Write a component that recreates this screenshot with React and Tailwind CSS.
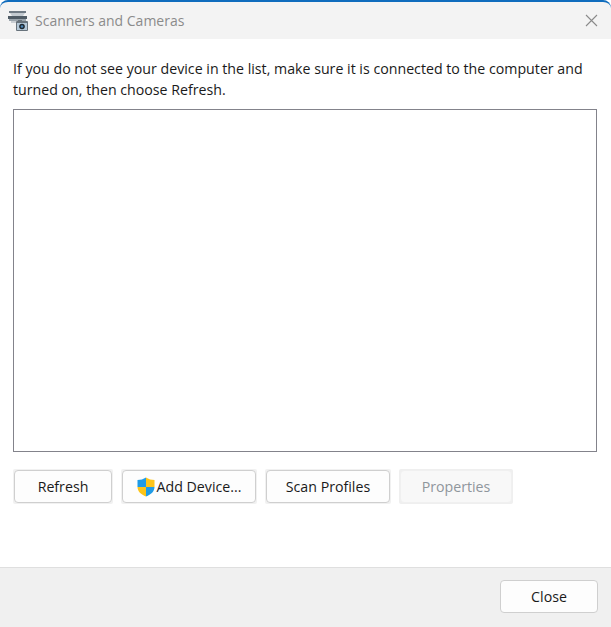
import { useState } from 'react'

function ScannerIcon() {
  return (
    <svg width="21" height="21" viewBox="0 0 21 21" className="shrink-0">
      <rect x="1" y="1" width="17" height="2" fill="#6f7a84" />
      <path d="M2 3h15l-2 3H4z" fill="#c3cad0" />
      <rect x="0" y="6" width="19" height="3" fill="#4f5b65" />
      <rect x="1" y="9" width="17" height="2" fill="#9aa4ac" />
      <rect x="3" y="11" width="5" height="2" fill="#c9ced3" />
      <rect x="8" y="11" width="12" height="10" rx="1" fill="#68737c" />
      <rect x="9" y="13" width="10" height="7" fill="#b4c8d8" />
      <rect x="10" y="10" width="4" height="2" fill="#68737c" />
      <circle cx="14" cy="16.5" r="2.8" fill="#1d2730" />
      <circle cx="14" cy="16.5" r="1.3" fill="#4b86b8" />
    </svg>
  )
}

function ShieldIcon() {
  return (
    <svg width="18" height="20" viewBox="1 0 17 20" className="shrink-0">
      <path d="M9.5 0.5C7 2.2 4 3 1 3v7h8.5z" fill="#1f9be6" />
      <path d="M9.5 0.5V10H18V3c-3 0-6-.8-8.5-2.5z" fill="#fcc419" />
      <path d="M9.5 10v9.5c5-2 8.5-5 8.5-9.5z" fill="#1f9be6" />
      <path d="M1 10c0 4.5 3.5 7.5 8.5 9.5V10z" fill="#fcc419" />
    </svg>
  )
}

function DialogButton({ children, className = '', disabled = false }) {
  return (
    <div className={`rounded-[2px] p-px ${disabled ? 'bg-[#efefef]' : 'bg-[#f1f1f1]'} ${className}`}>
      <button
        disabled={disabled}
        className={`flex h-[33px] w-full items-center justify-center rounded-[4px] border text-[14.2px] ${
          disabled
            ? 'border-[#f0f0f0] bg-[#f8f8f8] text-[#8f969c]'
            : 'border-[#cfcfcf] bg-[#fdfdfd] text-[#1a1a1a]'
        }`}
      >
        {children}
      </button>
    </div>
  )
}

export default function App() {
  const [devices] = useState([])

  return (
    <div className="flex h-[627px] w-[611px] flex-col overflow-hidden bg-white font-['Open_Sans','Noto_Sans',sans-serif]">
      <div className="flex h-[39px] shrink-0 items-center justify-between rounded-t-[8px] border-t-2 border-[#0f6cbd] bg-[#f3f3f3] pl-[8px] pr-[13px]">
        <div className="flex items-center gap-[6px]">
          <ScannerIcon />
          <span className="text-[14px] text-[#8b8b8b]">Scanners and Cameras</span>
        </div>
        <svg width="13" height="13" viewBox="0 0 13 13" className="text-[#8a8a8a]">
          <path d="M1 1l11 11M12 1L1 12" stroke="currentColor" strokeWidth="1.1" fill="none" />
        </svg>
      </div>

      <div className="flex flex-1 flex-col px-[13px] pt-[19px]">
        <p className="h-[51px] w-[585px] text-[14.2px] leading-[21px] text-[#1a1a1a]">
          If you do not see your device in the list, make sure it is connected to the computer and turned on, then choose Refresh.
        </p>
        <div className="h-[343px] w-[584px] border border-[#83838b] bg-white">
          {devices.map((d) => (
            <div key={d}>{d}</div>
          ))}
        </div>
        <div className="mt-[17px] flex gap-2">
          <DialogButton className="w-[100px]">Refresh</DialogButton>
          <DialogButton className="w-[136px]">
            <ShieldIcon />
            <span className="ml-[2px]">Add Device...</span>
          </DialogButton>
          <DialogButton className="w-[126px]">Scan Profiles</DialogButton>
          <DialogButton className="w-[114px]" disabled>Properties</DialogButton>
        </div>
      </div>

      <div className="flex h-[60px] shrink-0 items-start justify-end border-t border-[#dfdfdf] bg-[#f0f0f0] pr-[13px] pt-[12px]">
        <button className="flex h-[33px] w-[98px] items-center justify-center rounded-[4px] border border-[#cfcfcf] bg-[#fdfdfd] text-[14.2px] text-[#1a1a1a]">
          Close
        </button>
      </div>
    </div>
  )
}
